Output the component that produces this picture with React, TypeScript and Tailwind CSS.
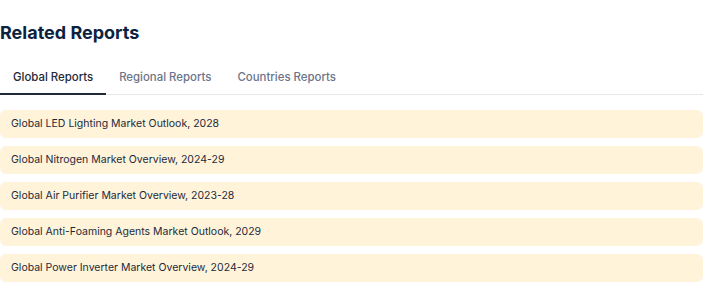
import React from "react";

const tabs = ["Global Reports", "Regional Reports", "Countries Reports"];

const reports = [
  "Global LED Lighting Market Outlook, 2028",
  "Global Nitrogen Market Overview, 2024-29",
  "Global Air Purifier Market Overview, 2023-28",
  "Global Anti-Foaming Agents Market Outlook, 2029",
  "Global Power Inverter Market Overview, 2024-29",
];

export default function App() {
  return (
    <div className="w-[712px] h-[295px] bg-white font-['Inter',sans-serif]">
      <div className="w-[703px] pt-[21px]">
        <h2 className="text-[18px] leading-[24px] font-bold text-[#0c2340]">
          Related Reports
        </h2>
        <div className="mt-[19px] flex border-b border-[#e5e7eb]">
          {tabs.map((tab, i) => (
            <button
              key={tab}
              className={
                i === 0
                  ? "-mb-px px-[13px] pt-[5px] pb-[8px] text-[11.4px] leading-[16px] font-medium text-[#1f2937] border-b-2 border-[#1f2937]"
                  : "-mb-px px-[13px] pt-[5px] pb-[8px] text-[11.4px] leading-[16px] font-medium text-[#6b7489] border-b-2 border-transparent"
              }
            >
              {tab}
            </button>
          ))}
        </div>
        <div className="mt-[15px] flex flex-col gap-[8px]">
          {reports.map((r) => (
            <div
              key={r}
              className="h-[28px] flex items-center px-[11px] rounded-[6px] bg-[#fff4d9] text-[10.5px] text-[#1e293b]"
            >
              {r}
            </div>
          ))}
        </div>
      </div>
    </div>
  );
}
